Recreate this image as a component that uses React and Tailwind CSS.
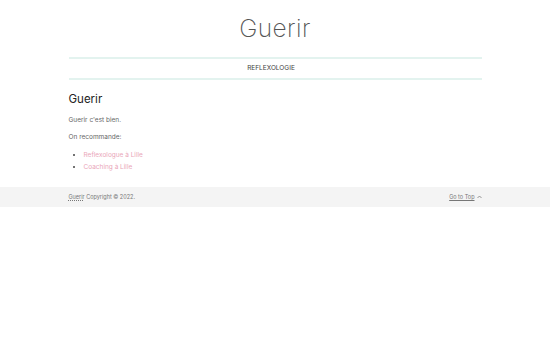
export default function App() {
  return (
    <div className="min-h-[344px] bg-white text-[#666]" style={{ fontFamily: 'Inter, "Open Sans", sans-serif' }}>
      <header className="w-[413px] mx-auto">
        <div className="h-[57px] flex items-center justify-center">
          <h1 className="text-[24.5px] font-extralight text-[#555] tracking-[0.4px]">Guerir</h1>
        </div>
        <nav className="border-y-2 border-[#e3f3ef] h-[23px] flex items-center justify-center">
          <a className="text-[6.5px] font-normal text-[#444] uppercase translate-x-[-4px]">Reflexologie</a>
        </nav>
      </header>
      <main className="w-[413px] mx-auto pt-[11px] pb-[14px]">
        <h2 className="text-[11.5px] text-[#222] leading-[16px]">Guerir</h2>
        <p className="mt-[8px] text-[6.5px] leading-[10px]">Guerir c'est bien.</p>
        <p className="mt-[7px] text-[6.5px] leading-[10px]">On recommande:</p>
        <ul className="mt-[7px] pl-[15px] list-disc text-[6.5px] leading-[12px] marker:text-[#444]">
          <li className="text-[#eaa6b9]">Reflexologue à Lille</li>
          <li className="text-[#eaa6b9]">Coaching à Lille</li>
        </ul>
      </main>
      <footer className="bg-[#f4f4f4] h-[20px]">
        <div className="w-[413px] mx-auto h-full flex items-center justify-between text-[5.5px] text-[#777]">
          <span><a className="underline decoration-dotted">Guerir</a> Copyright © 2022.</span>
          <a className="underline flex items-center gap-[2px]">
            Go to Top
            <svg width="5" height="4" viewBox="0 0 10 6" fill="none" stroke="#777" strokeWidth="1.5">
              <path d="M1 5 L5 1 L9 5" />
            </svg>
          </a>
        </div>
      </footer>
    </div>
  );
}
